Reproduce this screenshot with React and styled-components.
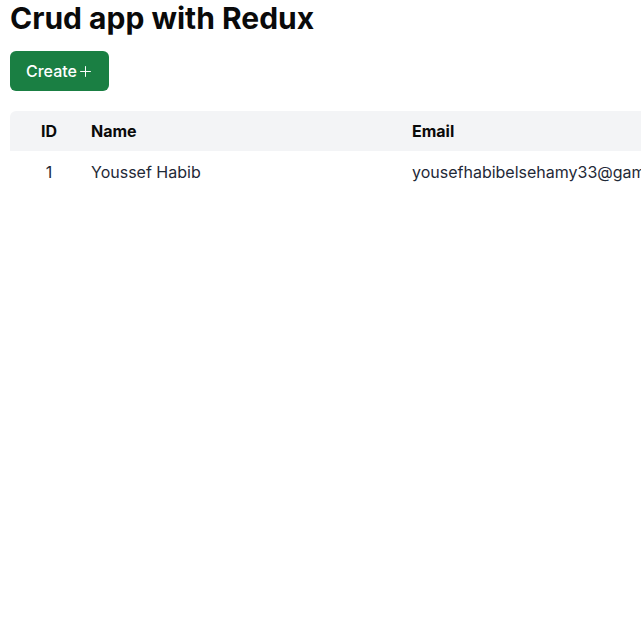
import React from "react";
import styled, { createGlobalStyle } from "styled-components";
import { Plus } from "lucide-react";

const GlobalStyle = createGlobalStyle`
  * { box-sizing: border-box; }
  html, body {
    margin: 0;
    background: #ffffff;
    overflow: hidden;
  }
  body {
    font-family: Inter, "Noto Sans", sans-serif;
    color: #111827;
  }
`;

const Page = styled.div`
  padding: 0 10px;
`;

const Title = styled.h1`
  margin: 0;
  font-size: 30px;
  line-height: 36px;
  font-weight: 700;
  color: #0a0a0a;
`;

const CreateButton = styled.button`
  display: inline-flex;
  align-items: center;
  margin-top: 15px;
  height: 40px;
  padding: 0 15px 0 16px;
  border: none;
  border-radius: 6px;
  background: #1a7f43;
  color: #ffffff;
  font-family: inherit;
  font-size: 16px;
  font-weight: 500;
`;

const Table = styled.table`
  margin-top: 20px;
  width: 1000px;
  border-collapse: separate;
  border-spacing: 0;
  table-layout: fixed;
  font-size: 16px;
`;

const Head = styled.thead`
  background: #f3f4f6;
`;

const Th = styled.th`
  height: 40px;
  padding: ${(p) => (p.$first ? "0 3px 0 24px" : "0 24px")};
  text-align: ${(p) => (p.$first ? "center" : "left")};
  font-weight: 700;
  color: #0a0a0a;
  &:first-child { border-top-left-radius: 6px; }
`;

const Td = styled.td`
  height: 42px;
  padding: ${(p) => (p.$first ? "0 3px 0 24px" : "0 24px")};
  text-align: ${(p) => (p.$first ? "center" : "left")};
  color: #1f2937;
  white-space: nowrap;
`;

const users = [
  { id: 1, name: "Youssef Habib", email: "yousefhabibelsehamy33@gamil.com" },
];

export default function App() {
  return (
    <Page>
      <GlobalStyle />
      <Title>Crud app with Redux</Title>
      <CreateButton>
        Create
        <Plus size={17} strokeWidth={1.4} />
      </CreateButton>
      <Table>
        <colgroup>
          <col style={{ width: 57 }} />
          <col style={{ width: 321 }} />
          <col />
        </colgroup>
        <Head>
          <tr>
            <Th $first>ID</Th>
            <Th>Name</Th>
            <Th>Email</Th>
          </tr>
        </Head>
        <tbody>
          {users.map((u) => (
            <tr key={u.id}>
              <Td $first>{u.id}</Td>
              <Td>{u.name}</Td>
              <Td>{u.email}</Td>
            </tr>
          ))}
        </tbody>
      </Table>
    </Page>
  );
}
